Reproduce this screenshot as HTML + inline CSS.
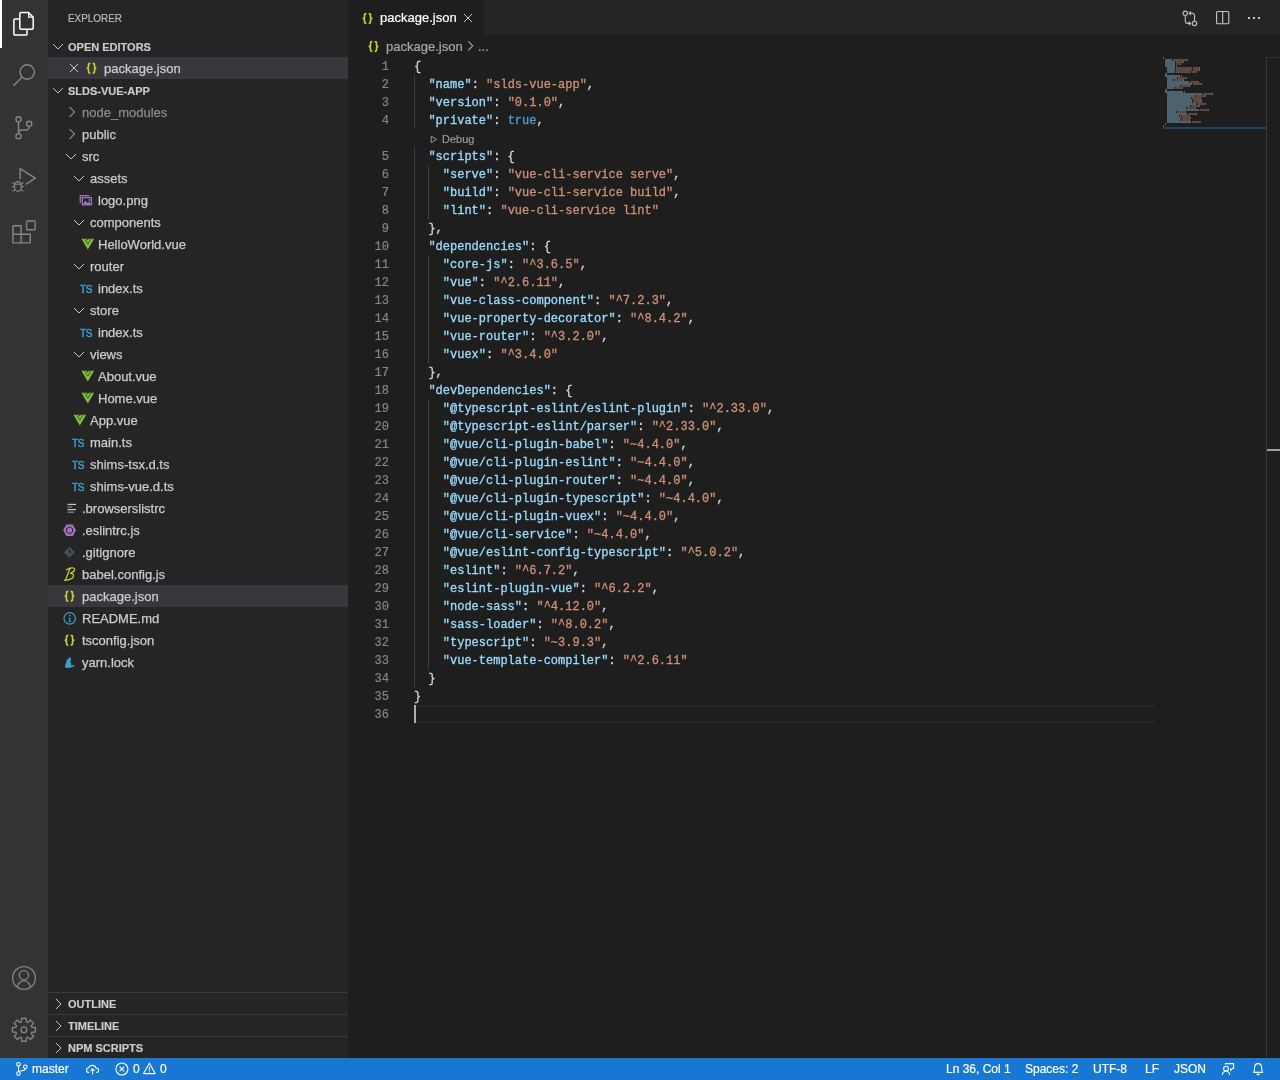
<!DOCTYPE html>
<html><head><meta charset="utf-8"><style>
*{box-sizing:border-box}
body{margin:0;width:1280px;height:1080px;overflow:hidden;background:#1e1e1e;font-family:"Liberation Sans",sans-serif;position:relative;color:#ccc}
.wrap{position:absolute;left:0;top:0;width:1280px;height:1080px;will-change:transform}
.a{position:absolute;white-space:nowrap;-webkit-text-stroke-width:0.2px}
.ab{position:absolute;left:0;top:0;width:48px;height:1058px;background:#333}
.sb{position:absolute;left:48px;top:0;width:300px;height:1058px;background:#252526}
.tabs{position:absolute;left:348px;top:0;width:932px;height:35px;background:#252526}
.tab{position:absolute;left:348px;top:0;width:136px;height:35px;background:#1e1e1e}
.st{position:absolute;left:0;top:1058px;width:1280px;height:22px;background:#1777d3;color:#fff;font-size:12px}
.st .t{-webkit-text-stroke-width:0.2px;position:absolute;top:0;line-height:22px;white-space:nowrap}
.row{position:absolute;left:48px;width:300px;height:22px}
.txt{-webkit-text-stroke-width:0.25px;position:absolute;line-height:22px;font-size:13px;color:#ccc;white-space:nowrap;top:1px}
.hdr{-webkit-text-stroke-width:0.15px;position:absolute;line-height:22px;font-size:11px;font-weight:bold;color:#ccc;white-space:nowrap;top:1px;left:20px}
.sel{background:#37373d}
.ln{-webkit-text-stroke-width:0.3px;position:absolute;left:414px;height:18px;line-height:18px;white-space:pre;font-family:"Liberation Mono",monospace;font-size:12px;color:#d4d4d4}
.num{-webkit-text-stroke-width:0.2px;position:absolute;left:348px;width:41px;height:18px;line-height:18px;text-align:right;font-family:"Liberation Mono",monospace;font-size:12px;color:#858585}
.num.cur{color:#858585}
.k{color:#9cdcfe}.s{color:#ce9178}.b{color:#569cd6}
.g{position:absolute;width:1px;background:#404040}
svg.i{position:absolute;left:0;top:0;overflow:visible}
.ts{position:absolute;font-weight:normal;font-size:10px;line-height:10px;color:#3a9fcb;letter-spacing:-0.4px;-webkit-text-stroke:0.45px #3a9fcb}
</style></head><body><div class="wrap">
<div class="ab"></div><div class="sb"></div><div class="tabs"></div><div class="tab"></div>
<div class="a" style="left:68px;top:7px;line-height:22px;font-size:11px;color:#bbb;transform:scaleX(0.9);transform-origin:0 0">EXPLORER</div>
<div class="row" style="top:35px"><div class="hdr">OPEN EDITORS</div></div>
<div class="row sel" style="top:57px"><div class="txt" style="left:56px">package.json</div></div>
<div class="row" style="top:79px"><div class="hdr">SLDS-VUE-APP</div></div>
<div class="row" style="top:101px"><div class="txt" style="left:34px;color:#8c8c8c">node_modules</div></div>
<div class="row" style="top:123px"><div class="txt" style="left:34px">public</div></div>
<div class="row" style="top:145px"><div class="txt" style="left:34px">src</div></div>
<div class="row" style="top:167px"><div class="txt" style="left:42px">assets</div></div>
<div class="row" style="top:189px"><div class="txt" style="left:50px">logo.png</div></div>
<div class="row" style="top:211px"><div class="txt" style="left:42px">components</div></div>
<div class="row" style="top:233px"><div class="txt" style="left:50px">HelloWorld.vue</div></div>
<div class="row" style="top:255px"><div class="txt" style="left:42px">router</div></div>
<div class="row" style="top:277px"><div class="txt" style="left:50px">index.ts</div></div>
<div class="ts" style="left:80px;top:285px">TS</div>
<div class="row" style="top:299px"><div class="txt" style="left:42px">store</div></div>
<div class="row" style="top:321px"><div class="txt" style="left:50px">index.ts</div></div>
<div class="ts" style="left:80px;top:329px">TS</div>
<div class="row" style="top:343px"><div class="txt" style="left:42px">views</div></div>
<div class="row" style="top:365px"><div class="txt" style="left:50px">About.vue</div></div>
<div class="row" style="top:387px"><div class="txt" style="left:50px">Home.vue</div></div>
<div class="row" style="top:409px"><div class="txt" style="left:42px">App.vue</div></div>
<div class="row" style="top:431px"><div class="txt" style="left:42px">main.ts</div></div>
<div class="ts" style="left:72px;top:439px">TS</div>
<div class="row" style="top:453px"><div class="txt" style="left:42px">shims-tsx.d.ts</div></div>
<div class="ts" style="left:72px;top:461px">TS</div>
<div class="row" style="top:475px"><div class="txt" style="left:42px">shims-vue.d.ts</div></div>
<div class="ts" style="left:72px;top:483px">TS</div>
<div class="row" style="top:497px"><div class="txt" style="left:34px">.browserslistrc</div></div>
<div class="row" style="top:519px"><div class="txt" style="left:34px">.eslintrc.js</div></div>
<div class="row" style="top:541px"><div class="txt" style="left:34px">.gitignore</div></div>
<div class="row" style="top:563px"><div class="txt" style="left:34px">babel.config.js</div></div>
<div class="row sel" style="top:585px"><div class="txt" style="left:34px">package.json</div></div>
<div class="row" style="top:607px"><div class="txt" style="left:34px">README.md</div></div>
<div class="row" style="top:629px"><div class="txt" style="left:34px">tsconfig.json</div></div>
<div class="row" style="top:651px"><div class="txt" style="left:34px">yarn.lock</div></div>
<div class="row" style="top:992px;border-top:1px solid #3c3c3c"><div class="hdr" style="top:0">OUTLINE</div></div>
<div class="row" style="top:1014px;border-top:1px solid #3c3c3c"><div class="hdr" style="top:0">TIMELINE</div></div>
<div class="row" style="top:1036px;border-top:1px solid #3c3c3c"><div class="hdr" style="top:0">NPM SCRIPTS</div></div>
<div class="a" style="left:380px;top:7px;line-height:22px;font-size:13px;color:#fff">package.json</div>
<div class="a" style="left:386px;top:36px;line-height:22px;font-size:13px;color:#a9a9a9">package.json</div>
<div class="a" style="left:478px;top:36px;line-height:22px;font-size:13px;color:#a9a9a9">...</div>
<div class="a" style="left:414px;top:705px;width:741px;height:18px;border-top:2px solid #282828;border-bottom:2px solid #282828"></div>
<div class="g" style="left:414px;top:75px;height:54px"></div>
<div class="g" style="left:414px;top:147px;height:540px"></div>
<div class="g" style="left:428px;top:165px;height:54px"></div>
<div class="g" style="left:428px;top:255px;height:108px"></div>
<div class="g" style="left:428px;top:399px;height:270px"></div>
<div class="num" style="top:58px">1</div>
<div class="ln" style="top:58px">{</div>
<div class="num" style="top:76px">2</div>
<div class="ln" style="top:76px">  <span class="k">"name"</span>: <span class="s">"slds-vue-app"</span>,</div>
<div class="num" style="top:94px">3</div>
<div class="ln" style="top:94px">  <span class="k">"version"</span>: <span class="s">"0.1.0"</span>,</div>
<div class="num" style="top:112px">4</div>
<div class="ln" style="top:112px">  <span class="k">"private"</span>: <span class="b">true</span>,</div>
<div class="num" style="top:148px">5</div>
<div class="ln" style="top:148px">  <span class="k">"scripts"</span>: {</div>
<div class="num" style="top:166px">6</div>
<div class="ln" style="top:166px">    <span class="k">"serve"</span>: <span class="s">"vue-cli-service serve"</span>,</div>
<div class="num" style="top:184px">7</div>
<div class="ln" style="top:184px">    <span class="k">"build"</span>: <span class="s">"vue-cli-service build"</span>,</div>
<div class="num" style="top:202px">8</div>
<div class="ln" style="top:202px">    <span class="k">"lint"</span>: <span class="s">"vue-cli-service lint"</span></div>
<div class="num" style="top:220px">9</div>
<div class="ln" style="top:220px">  },</div>
<div class="num" style="top:238px">10</div>
<div class="ln" style="top:238px">  <span class="k">"dependencies"</span>: {</div>
<div class="num" style="top:256px">11</div>
<div class="ln" style="top:256px">    <span class="k">"core-js"</span>: <span class="s">"^3.6.5"</span>,</div>
<div class="num" style="top:274px">12</div>
<div class="ln" style="top:274px">    <span class="k">"vue"</span>: <span class="s">"^2.6.11"</span>,</div>
<div class="num" style="top:292px">13</div>
<div class="ln" style="top:292px">    <span class="k">"vue-class-component"</span>: <span class="s">"^7.2.3"</span>,</div>
<div class="num" style="top:310px">14</div>
<div class="ln" style="top:310px">    <span class="k">"vue-property-decorator"</span>: <span class="s">"^8.4.2"</span>,</div>
<div class="num" style="top:328px">15</div>
<div class="ln" style="top:328px">    <span class="k">"vue-router"</span>: <span class="s">"^3.2.0"</span>,</div>
<div class="num" style="top:346px">16</div>
<div class="ln" style="top:346px">    <span class="k">"vuex"</span>: <span class="s">"^3.4.0"</span></div>
<div class="num" style="top:364px">17</div>
<div class="ln" style="top:364px">  },</div>
<div class="num" style="top:382px">18</div>
<div class="ln" style="top:382px">  <span class="k">"devDependencies"</span>: {</div>
<div class="num" style="top:400px">19</div>
<div class="ln" style="top:400px">    <span class="k">"@typescript-eslint/eslint-plugin"</span>: <span class="s">"^2.33.0"</span>,</div>
<div class="num" style="top:418px">20</div>
<div class="ln" style="top:418px">    <span class="k">"@typescript-eslint/parser"</span>: <span class="s">"^2.33.0"</span>,</div>
<div class="num" style="top:436px">21</div>
<div class="ln" style="top:436px">    <span class="k">"@vue/cli-plugin-babel"</span>: <span class="s">"~4.4.0"</span>,</div>
<div class="num" style="top:454px">22</div>
<div class="ln" style="top:454px">    <span class="k">"@vue/cli-plugin-eslint"</span>: <span class="s">"~4.4.0"</span>,</div>
<div class="num" style="top:472px">23</div>
<div class="ln" style="top:472px">    <span class="k">"@vue/cli-plugin-router"</span>: <span class="s">"~4.4.0"</span>,</div>
<div class="num" style="top:490px">24</div>
<div class="ln" style="top:490px">    <span class="k">"@vue/cli-plugin-typescript"</span>: <span class="s">"~4.4.0"</span>,</div>
<div class="num" style="top:508px">25</div>
<div class="ln" style="top:508px">    <span class="k">"@vue/cli-plugin-vuex"</span>: <span class="s">"~4.4.0"</span>,</div>
<div class="num" style="top:526px">26</div>
<div class="ln" style="top:526px">    <span class="k">"@vue/cli-service"</span>: <span class="s">"~4.4.0"</span>,</div>
<div class="num" style="top:544px">27</div>
<div class="ln" style="top:544px">    <span class="k">"@vue/eslint-config-typescript"</span>: <span class="s">"^5.0.2"</span>,</div>
<div class="num" style="top:562px">28</div>
<div class="ln" style="top:562px">    <span class="k">"eslint"</span>: <span class="s">"^6.7.2"</span>,</div>
<div class="num" style="top:580px">29</div>
<div class="ln" style="top:580px">    <span class="k">"eslint-plugin-vue"</span>: <span class="s">"^6.2.2"</span>,</div>
<div class="num" style="top:598px">30</div>
<div class="ln" style="top:598px">    <span class="k">"node-sass"</span>: <span class="s">"^4.12.0"</span>,</div>
<div class="num" style="top:616px">31</div>
<div class="ln" style="top:616px">    <span class="k">"sass-loader"</span>: <span class="s">"^8.0.2"</span>,</div>
<div class="num" style="top:634px">32</div>
<div class="ln" style="top:634px">    <span class="k">"typescript"</span>: <span class="s">"~3.9.3"</span>,</div>
<div class="num" style="top:652px">33</div>
<div class="ln" style="top:652px">    <span class="k">"vue-template-compiler"</span>: <span class="s">"^2.6.11"</span></div>
<div class="num" style="top:670px">34</div>
<div class="ln" style="top:670px">  }</div>
<div class="num" style="top:688px">35</div>
<div class="ln" style="top:688px">}</div>
<div class="num cur" style="top:706px">36</div>
<div class="a" style="left:414px;top:705px;width:2px;height:18px;background:#aeafad"></div>
<div class="a" style="left:442px;top:130px;line-height:18px;font-size:11px;color:#999">Debug</div>
<svg class="i" width="1" height="1"><path d="M431.2 136.2 L436.6 139.4 L431.2 142.6 Z" fill="none" stroke="#999" stroke-width="1"/></svg>
<svg class="i" width="1" height="1"><rect x="1163" y="127" width="103" height="2" fill="#264f78" opacity="0.75"/><g opacity="0.6"><rect x="1163.00" y="57.4" width="1.00" height="1.2" fill="#d4d4d4"/><rect x="1165.00" y="59.4" width="6.00" height="1.2" fill="#9cdcfe"/><rect x="1171.00" y="59.4" width="1.00" height="1.2" fill="#d4d4d4"/><rect x="1173.00" y="59.4" width="14.00" height="1.2" fill="#ce9178"/><rect x="1187.00" y="59.4" width="1.00" height="1.2" fill="#d4d4d4"/><rect x="1165.00" y="61.4" width="9.00" height="1.2" fill="#9cdcfe"/><rect x="1174.00" y="61.4" width="1.00" height="1.2" fill="#d4d4d4"/><rect x="1176.00" y="61.4" width="7.00" height="1.2" fill="#ce9178"/><rect x="1183.00" y="61.4" width="1.00" height="1.2" fill="#d4d4d4"/><rect x="1165.00" y="63.4" width="9.00" height="1.2" fill="#9cdcfe"/><rect x="1174.00" y="63.4" width="1.00" height="1.2" fill="#d4d4d4"/><rect x="1176.00" y="63.4" width="4.00" height="1.2" fill="#569cd6"/><rect x="1180.00" y="63.4" width="1.00" height="1.2" fill="#d4d4d4"/><rect x="1165.00" y="65.4" width="9.00" height="1.2" fill="#9cdcfe"/><rect x="1174.00" y="65.4" width="1.00" height="1.2" fill="#d4d4d4"/><rect x="1176.00" y="65.4" width="1.00" height="1.2" fill="#d4d4d4"/><rect x="1167.00" y="67.4" width="7.00" height="1.2" fill="#9cdcfe"/><rect x="1174.00" y="67.4" width="1.00" height="1.2" fill="#d4d4d4"/><rect x="1176.00" y="67.4" width="16.00" height="1.2" fill="#ce9178"/><rect x="1193.00" y="67.4" width="6.00" height="1.2" fill="#ce9178"/><rect x="1199.00" y="67.4" width="1.00" height="1.2" fill="#d4d4d4"/><rect x="1167.00" y="69.4" width="7.00" height="1.2" fill="#9cdcfe"/><rect x="1174.00" y="69.4" width="1.00" height="1.2" fill="#d4d4d4"/><rect x="1176.00" y="69.4" width="16.00" height="1.2" fill="#ce9178"/><rect x="1193.00" y="69.4" width="6.00" height="1.2" fill="#ce9178"/><rect x="1199.00" y="69.4" width="1.00" height="1.2" fill="#d4d4d4"/><rect x="1167.00" y="71.4" width="6.00" height="1.2" fill="#9cdcfe"/><rect x="1173.00" y="71.4" width="1.00" height="1.2" fill="#d4d4d4"/><rect x="1175.00" y="71.4" width="16.00" height="1.2" fill="#ce9178"/><rect x="1192.00" y="71.4" width="5.00" height="1.2" fill="#ce9178"/><rect x="1165.00" y="73.4" width="2.00" height="1.2" fill="#d4d4d4"/><rect x="1165.00" y="75.4" width="14.00" height="1.2" fill="#9cdcfe"/><rect x="1179.00" y="75.4" width="1.00" height="1.2" fill="#d4d4d4"/><rect x="1181.00" y="75.4" width="1.00" height="1.2" fill="#d4d4d4"/><rect x="1167.00" y="77.4" width="9.00" height="1.2" fill="#9cdcfe"/><rect x="1176.00" y="77.4" width="1.00" height="1.2" fill="#d4d4d4"/><rect x="1178.00" y="77.4" width="8.00" height="1.2" fill="#ce9178"/><rect x="1186.00" y="77.4" width="1.00" height="1.2" fill="#d4d4d4"/><rect x="1167.00" y="79.4" width="5.00" height="1.2" fill="#9cdcfe"/><rect x="1172.00" y="79.4" width="1.00" height="1.2" fill="#d4d4d4"/><rect x="1174.00" y="79.4" width="9.00" height="1.2" fill="#ce9178"/><rect x="1183.00" y="79.4" width="1.00" height="1.2" fill="#d4d4d4"/><rect x="1167.00" y="81.4" width="21.00" height="1.2" fill="#9cdcfe"/><rect x="1188.00" y="81.4" width="1.00" height="1.2" fill="#d4d4d4"/><rect x="1190.00" y="81.4" width="8.00" height="1.2" fill="#ce9178"/><rect x="1198.00" y="81.4" width="1.00" height="1.2" fill="#d4d4d4"/><rect x="1167.00" y="83.4" width="24.00" height="1.2" fill="#9cdcfe"/><rect x="1191.00" y="83.4" width="1.00" height="1.2" fill="#d4d4d4"/><rect x="1193.00" y="83.4" width="8.00" height="1.2" fill="#ce9178"/><rect x="1201.00" y="83.4" width="1.00" height="1.2" fill="#d4d4d4"/><rect x="1167.00" y="85.4" width="12.00" height="1.2" fill="#9cdcfe"/><rect x="1179.00" y="85.4" width="1.00" height="1.2" fill="#d4d4d4"/><rect x="1181.00" y="85.4" width="8.00" height="1.2" fill="#ce9178"/><rect x="1189.00" y="85.4" width="1.00" height="1.2" fill="#d4d4d4"/><rect x="1167.00" y="87.4" width="6.00" height="1.2" fill="#9cdcfe"/><rect x="1173.00" y="87.4" width="1.00" height="1.2" fill="#d4d4d4"/><rect x="1175.00" y="87.4" width="8.00" height="1.2" fill="#ce9178"/><rect x="1165.00" y="89.4" width="2.00" height="1.2" fill="#d4d4d4"/><rect x="1165.00" y="91.4" width="17.00" height="1.2" fill="#9cdcfe"/><rect x="1182.00" y="91.4" width="1.00" height="1.2" fill="#d4d4d4"/><rect x="1184.00" y="91.4" width="1.00" height="1.2" fill="#d4d4d4"/><rect x="1167.00" y="93.4" width="34.00" height="1.2" fill="#9cdcfe"/><rect x="1201.00" y="93.4" width="1.00" height="1.2" fill="#d4d4d4"/><rect x="1203.00" y="93.4" width="9.00" height="1.2" fill="#ce9178"/><rect x="1212.00" y="93.4" width="1.00" height="1.2" fill="#d4d4d4"/><rect x="1167.00" y="95.4" width="27.00" height="1.2" fill="#9cdcfe"/><rect x="1194.00" y="95.4" width="1.00" height="1.2" fill="#d4d4d4"/><rect x="1196.00" y="95.4" width="9.00" height="1.2" fill="#ce9178"/><rect x="1205.00" y="95.4" width="1.00" height="1.2" fill="#d4d4d4"/><rect x="1167.00" y="97.4" width="23.00" height="1.2" fill="#9cdcfe"/><rect x="1190.00" y="97.4" width="1.00" height="1.2" fill="#d4d4d4"/><rect x="1192.00" y="97.4" width="8.00" height="1.2" fill="#ce9178"/><rect x="1200.00" y="97.4" width="1.00" height="1.2" fill="#d4d4d4"/><rect x="1167.00" y="99.4" width="24.00" height="1.2" fill="#9cdcfe"/><rect x="1191.00" y="99.4" width="1.00" height="1.2" fill="#d4d4d4"/><rect x="1193.00" y="99.4" width="8.00" height="1.2" fill="#ce9178"/><rect x="1201.00" y="99.4" width="1.00" height="1.2" fill="#d4d4d4"/><rect x="1167.00" y="101.4" width="24.00" height="1.2" fill="#9cdcfe"/><rect x="1191.00" y="101.4" width="1.00" height="1.2" fill="#d4d4d4"/><rect x="1193.00" y="101.4" width="8.00" height="1.2" fill="#ce9178"/><rect x="1201.00" y="101.4" width="1.00" height="1.2" fill="#d4d4d4"/><rect x="1167.00" y="103.4" width="28.00" height="1.2" fill="#9cdcfe"/><rect x="1195.00" y="103.4" width="1.00" height="1.2" fill="#d4d4d4"/><rect x="1197.00" y="103.4" width="8.00" height="1.2" fill="#ce9178"/><rect x="1205.00" y="103.4" width="1.00" height="1.2" fill="#d4d4d4"/><rect x="1167.00" y="105.4" width="22.00" height="1.2" fill="#9cdcfe"/><rect x="1189.00" y="105.4" width="1.00" height="1.2" fill="#d4d4d4"/><rect x="1191.00" y="105.4" width="8.00" height="1.2" fill="#ce9178"/><rect x="1199.00" y="105.4" width="1.00" height="1.2" fill="#d4d4d4"/><rect x="1167.00" y="107.4" width="18.00" height="1.2" fill="#9cdcfe"/><rect x="1185.00" y="107.4" width="1.00" height="1.2" fill="#d4d4d4"/><rect x="1187.00" y="107.4" width="8.00" height="1.2" fill="#ce9178"/><rect x="1195.00" y="107.4" width="1.00" height="1.2" fill="#d4d4d4"/><rect x="1167.00" y="109.4" width="31.00" height="1.2" fill="#9cdcfe"/><rect x="1198.00" y="109.4" width="1.00" height="1.2" fill="#d4d4d4"/><rect x="1200.00" y="109.4" width="8.00" height="1.2" fill="#ce9178"/><rect x="1208.00" y="109.4" width="1.00" height="1.2" fill="#d4d4d4"/><rect x="1167.00" y="111.4" width="8.00" height="1.2" fill="#9cdcfe"/><rect x="1175.00" y="111.4" width="1.00" height="1.2" fill="#d4d4d4"/><rect x="1177.00" y="111.4" width="8.00" height="1.2" fill="#ce9178"/><rect x="1185.00" y="111.4" width="1.00" height="1.2" fill="#d4d4d4"/><rect x="1167.00" y="113.4" width="19.00" height="1.2" fill="#9cdcfe"/><rect x="1186.00" y="113.4" width="1.00" height="1.2" fill="#d4d4d4"/><rect x="1188.00" y="113.4" width="8.00" height="1.2" fill="#ce9178"/><rect x="1196.00" y="113.4" width="1.00" height="1.2" fill="#d4d4d4"/><rect x="1167.00" y="115.4" width="11.00" height="1.2" fill="#9cdcfe"/><rect x="1178.00" y="115.4" width="1.00" height="1.2" fill="#d4d4d4"/><rect x="1180.00" y="115.4" width="9.00" height="1.2" fill="#ce9178"/><rect x="1189.00" y="115.4" width="1.00" height="1.2" fill="#d4d4d4"/><rect x="1167.00" y="117.4" width="13.00" height="1.2" fill="#9cdcfe"/><rect x="1180.00" y="117.4" width="1.00" height="1.2" fill="#d4d4d4"/><rect x="1182.00" y="117.4" width="8.00" height="1.2" fill="#ce9178"/><rect x="1190.00" y="117.4" width="1.00" height="1.2" fill="#d4d4d4"/><rect x="1167.00" y="119.4" width="12.00" height="1.2" fill="#9cdcfe"/><rect x="1179.00" y="119.4" width="1.00" height="1.2" fill="#d4d4d4"/><rect x="1181.00" y="119.4" width="8.00" height="1.2" fill="#ce9178"/><rect x="1189.00" y="119.4" width="1.00" height="1.2" fill="#d4d4d4"/><rect x="1167.00" y="121.4" width="23.00" height="1.2" fill="#9cdcfe"/><rect x="1190.00" y="121.4" width="1.00" height="1.2" fill="#d4d4d4"/><rect x="1192.00" y="121.4" width="9.00" height="1.2" fill="#ce9178"/><rect x="1165.00" y="123.4" width="1.00" height="1.2" fill="#d4d4d4"/><rect x="1163.00" y="125.4" width="1.00" height="1.2" fill="#d4d4d4"/></g></svg>
<div class="a" style="left:1266px;top:57px;width:1px;height:1001px;background:#3a3a3a"></div>
<div class="a" style="left:1266px;top:57px;width:14px;height:1px;background:#333"></div>
<div class="a" style="left:1267px;top:449px;width:13px;height:2px;background:#a0a0a0"></div>
<div class="st">
<div class="t" style="left:32px">master</div>
<div class="t" style="left:133px">0</div>
<div class="t" style="left:160px">0</div>
<div class="t" style="left:946px">Ln 36, Col 1</div>
<div class="t" style="left:1025px">Spaces: 2</div>
<div class="t" style="left:1093px">UTF-8</div>
<div class="t" style="left:1145px">LF</div>
<div class="t" style="left:1174px">JSON</div>
</div>
<svg class="i" width="1280" height="1080" viewBox="0 0 1280 1080">
<!-- activity bar -->
<rect x="0" y="0" width="2" height="48" fill="#fff"/>
<g fill="none" stroke="#fff" stroke-width="1.5" stroke-linejoin="round">
 <path d="M19.8 19 H15 Q13.9 19 13.9 20.1 V34 Q13.9 35.1 15 35.1 H25.9 Q27 35.1 27 34 V29.2"/>
 <path d="M20.9 12.6 H28.6 L33.2 17.2 V28.1 Q33.2 29.2 32.1 29.2 H20.9 Q19.8 29.2 19.8 28.1 V13.7 Q19.8 12.6 20.9 12.6 Z"/>
 <path d="M28.6 12.6 V17.2 H33.2" stroke-width="1.2"/>
</g>
<g fill="none" stroke="#858585" stroke-width="1.4">
 <circle cx="27.2" cy="72" r="7.2"/>
 <path d="M22.1 77.1 L13.5 85.8"/>
 <circle cx="18.5" cy="119.3" r="2.6"/>
 <circle cx="18.5" cy="136.2" r="2.6"/>
 <circle cx="29.2" cy="123.8" r="2.6"/>
 <path d="M18.5 121.9 V133.6"/>
 <path d="M29.2 126.4 Q29.2 130 25.5 130 H21.8 Q18.5 130 18.5 133"/>
 <path d="M20.1 178.9 V168.6 L35.3 178.1 L25.8 184.3" stroke-linejoin="round"/>
 <ellipse cx="17.9" cy="186.4" rx="3.5" ry="4.9" stroke-width="1.3"/>
 <path d="M14.4 184.2 H21.4" stroke-width="1.2"/>
 <path d="M12.4 182.4 L14.8 183.9 M23.4 182.4 L21 183.9 M12.1 186.6 H14.4 M23.7 186.6 H21.4 M12.4 191.2 L14.7 189.8 M23.4 191.2 L21.1 189.8" stroke-width="1.2"/>
 <path d="M13.4 225.7 H21.1 V242.9 H13.4 Q12.9 242.9 12.9 242.4 V226.2 Q12.9 225.7 13.4 225.7 Z M12.9 234.3 H30.3 V242.4 Q30.3 242.9 29.8 242.9 H21.1" stroke-linejoin="round"/>
 <rect x="26.6" y="221" width="8.6" height="8.8" rx="0.8"/>
 <circle cx="24" cy="978" r="11.4" stroke-width="1.3"/>
 <circle cx="23.9" cy="975.3" r="4.6" stroke-width="1.3"/>
 <path d="M17.2 987 Q18.8 980.8 23.9 980.8 Q29 980.8 30.6 987" stroke-width="1.3"/>
</g>
<g fill="none" stroke="#858585" stroke-width="1.3" stroke-linejoin="round">
 <path d="M21.45 1021.87 L21.58 1018.33 L26.22 1018.33 L26.35 1021.87 L27.77 1022.46 L30.36 1020.05 L33.65 1023.34 L31.24 1025.93 L31.83 1027.35 L35.37 1027.48 L35.37 1032.12 L31.83 1032.25 L31.24 1033.67 L33.65 1036.26 L30.36 1039.55 L27.77 1037.14 L26.35 1037.73 L26.22 1041.27 L21.58 1041.27 L21.45 1037.73 L20.03 1037.14 L17.44 1039.55 L14.15 1036.26 L16.56 1033.67 L15.97 1032.25 L12.43 1032.12 L12.43 1027.48 L15.97 1027.35 L16.56 1025.93 L14.15 1023.34 L17.44 1020.05 L20.03 1022.46 Z"/>
 <circle cx="23.9" cy="1029.8" r="2.9"/>
</g>
<!-- sidebar chevrons -->
<g fill="none" stroke="#c5c5c5" stroke-width="1">
 <path d="M53 44 L58 49 L63 44"/>
 <path d="M53 88 L58 93 L63 88"/>
 <path d="M70 64 L78 72 M78 64 L70 72"/>
 <path d="M69.5 107 L74.5 112 L69.5 117"/>
 <path d="M69.5 129 L74.5 134 L69.5 139"/>
 <path d="M66 154 L71 159 L76 154"/>
 <path d="M74 176 L79 181 L84 176"/>
 <path d="M74 220 L79 225 L84 220"/>
 <path d="M74 264 L79 269 L84 264"/>
 <path d="M74 308 L79 313 L84 308"/>
 <path d="M74 352 L79 357 L84 352"/>
 <path d="M56 999 L61 1004 L56 1009"/>
 <path d="M56 1021 L61 1026 L56 1031"/>
 <path d="M56 1043 L61 1048 L56 1053"/>
 <path d="M464 14 L472 22 M472 14 L464 22"/>
</g>
<!-- json braces -->
<path transform="translate(86 62.8)" d="M4.3 0.6 Q2.5 0.6 2.5 2.2 V4 Q2.5 5.5 0.6 5.5 Q2.5 5.5 2.5 7 V8.8 Q2.5 10.4 4.3 10.4 M6.7 0.6 Q8.5 0.6 8.5 2.2 V4 Q8.5 5.5 10.4 5.5 Q8.5 5.5 8.5 7 V8.8 Q8.5 10.4 6.7 10.4" fill="none" stroke="#cfcf2e" stroke-width="1.6"/>
<path transform="translate(64 590.8)" d="M4.3 0.6 Q2.5 0.6 2.5 2.2 V4 Q2.5 5.5 0.6 5.5 Q2.5 5.5 2.5 7 V8.8 Q2.5 10.4 4.3 10.4 M6.7 0.6 Q8.5 0.6 8.5 2.2 V4 Q8.5 5.5 10.4 5.5 Q8.5 5.5 8.5 7 V8.8 Q8.5 10.4 6.7 10.4" fill="none" stroke="#cfcf2e" stroke-width="1.6"/>
<path transform="translate(64 634.8)" d="M4.3 0.6 Q2.5 0.6 2.5 2.2 V4 Q2.5 5.5 0.6 5.5 Q2.5 5.5 2.5 7 V8.8 Q2.5 10.4 4.3 10.4 M6.7 0.6 Q8.5 0.6 8.5 2.2 V4 Q8.5 5.5 10.4 5.5 Q8.5 5.5 8.5 7 V8.8 Q8.5 10.4 6.7 10.4" fill="none" stroke="#cfcf2e" stroke-width="1.6"/>
<path transform="translate(362 13)" d="M4.3 0.6 Q2.5 0.6 2.5 2.2 V4 Q2.5 5.5 0.6 5.5 Q2.5 5.5 2.5 7 V8.8 Q2.5 10.4 4.3 10.4 M6.7 0.6 Q8.5 0.6 8.5 2.2 V4 Q8.5 5.5 10.4 5.5 Q8.5 5.5 8.5 7 V8.8 Q8.5 10.4 6.7 10.4" fill="none" stroke="#cfcf2e" stroke-width="1.6"/>
<path transform="translate(368 41)" d="M4.3 0.6 Q2.5 0.6 2.5 2.2 V4 Q2.5 5.5 0.6 5.5 Q2.5 5.5 2.5 7 V8.8 Q2.5 10.4 4.3 10.4 M6.7 0.6 Q8.5 0.6 8.5 2.2 V4 Q8.5 5.5 10.4 5.5 Q8.5 5.5 8.5 7 V8.8 Q8.5 10.4 6.7 10.4" fill="none" stroke="#cfcf2e" stroke-width="1.6"/>
<path d="M468.3 41.3 L472.7 45.8 L468.3 50.3" fill="none" stroke="#a9a9a9" stroke-width="1.1"/>
<!-- vue icons -->
<g transform="translate(81.5 238.5)"><path d="M0 0.3 H12.6 L6.3 11 Z" fill="#84c43a"/><path d="M2.9 0 L6.3 5.9 L9.7 0" fill="none" stroke="#252526" stroke-width="0.7"/><path d="M5.2 0.3 H7.4 L6.3 2.2 Z" fill="#252526"/></g>
<g transform="translate(81.5 370.5)"><path d="M0 0.3 H12.6 L6.3 11 Z" fill="#84c43a"/><path d="M2.9 0 L6.3 5.9 L9.7 0" fill="none" stroke="#252526" stroke-width="0.7"/><path d="M5.2 0.3 H7.4 L6.3 2.2 Z" fill="#252526"/></g>
<g transform="translate(81.5 392.5)"><path d="M0 0.3 H12.6 L6.3 11 Z" fill="#84c43a"/><path d="M2.9 0 L6.3 5.9 L9.7 0" fill="none" stroke="#252526" stroke-width="0.7"/><path d="M5.2 0.3 H7.4 L6.3 2.2 Z" fill="#252526"/></g>
<g transform="translate(73.5 414.5)"><path d="M0 0.3 H12.6 L6.3 11 Z" fill="#84c43a"/><path d="M2.9 0 L6.3 5.9 L9.7 0" fill="none" stroke="#252526" stroke-width="0.7"/><path d="M5.2 0.3 H7.4 L6.3 2.2 Z" fill="#252526"/></g>
<!-- image icon -->
<g fill="none" stroke="#a074c4" stroke-width="1.3">
 <path d="M80.3 203 V195.6 H89.5"/>
 <rect x="82.4" y="197.6" width="9" height="7.2"/>
</g>
<path d="M83 204.6 L85.5 200.5 L87.5 203 L89 201.5 L91 204.6 Z" fill="#a074c4"/>
<rect x="88.6" y="199.2" width="1.6" height="1.6" fill="#a074c4"/>
<!-- browserslist lines -->
<g stroke-width="1.2">
 <path d="M67.5 504.4 H76" stroke="#c8c8c8"/>
 <path d="M67.5 507 H72.3" stroke="#8a8a8a"/>
 <path d="M67.5 509.6 H76" stroke="#c8c8c8"/>
 <path d="M67.5 512.2 H74" stroke="#8a8a8a"/>
</g>
<!-- eslint -->
<path d="M66.4 524.6 H72.8 L76 530.3 L72.8 536 H66.4 L63.2 530.3 Z" fill="#a074c4"/>
<path d="M69.6 526.9 L72.55 528.6 V532 L69.6 533.7 L66.65 532 V528.6 Z" fill="none" stroke="#252526" stroke-width="1"/>
<circle cx="69.6" cy="530.3" r="1.9" fill="#a074c4"/>
<!-- git -->
<path d="M69.5 546.8 L75 552.3 L69.5 557.8 L64 552.3 Z" fill="#41535b"/>
<path d="M68.3 548.6 L69.5 549.8 V554.6 M69.5 550.6 L71.6 552.6 V553.4" stroke="#252526" stroke-width="0.9" fill="none"/>
<!-- babel B -->
<path d="M66.5 569.8 Q70 567.3 73.5 568 Q75.6 568.8 74 571 Q72.5 572.8 70.2 573.3 Q73.8 573.3 73.5 575.8 Q73 578.6 69 579.6 Q66.5 580.2 64.3 580.3 M70 568.2 Q68 574 65.5 580" fill="none" stroke="#cfcf2e" stroke-width="1.2" stroke-linecap="round"/>
<!-- info -->
<circle cx="69.7" cy="618.4" r="5.7" fill="none" stroke="#3a9fcb" stroke-width="1.2"/>
<circle cx="69.8" cy="615.6" r="0.9" fill="#3a9fcb"/>
<path d="M68.6 617.4 H70.4 V621.2 H71.2 V622 H68.4 V621.2 H69.2 V618.2 H68.6 Z" fill="#3a9fcb"/>
<!-- yarn cat -->
<path d="M69.3 657 Q70 657.6 70.8 658.2 Q71.3 660 70.5 661.8 Q71.2 663.3 71.3 665.6 Q73 665 74.5 665 Q74.8 665.6 73.6 666.5 Q72.4 667.3 71 667.6 Q69 668.2 66.5 668 Q65 667.9 65 666.8 Q65 664.6 65.8 663.2 Q66.5 662.2 66.6 661.4 Q66 660.8 66.8 659.9 Q68 659.3 68.6 658.6 Z" fill="#3a9fcb"/>
<!-- editor actions -->
<g fill="none" stroke="#c5c5c5" stroke-width="1.1">
 <circle cx="1185.3" cy="13.3" r="2.2"/>
 <circle cx="1194.5" cy="23.4" r="2.2"/>
 <path d="M1185.3 15.5 V21 Q1185.3 23.4 1187.7 23.4 H1190.6 M1188.8 21.6 L1190.6 23.4 L1188.8 25.2"/>
 <path d="M1194.5 21.2 V15.7 Q1194.5 13.3 1192.1 13.3 H1189.2 M1191 11.5 L1189.2 13.3 L1191 15.1"/>
 <rect x="1216.6" y="11.5" width="12.2" height="12.2" rx="1"/>
 <path d="M1222.7 11.5 V23.7"/>
</g>
<g fill="#c5c5c5">
 <rect x="1248" y="17" width="2" height="2"/><rect x="1253" y="17" width="2" height="2"/><rect x="1258" y="17" width="2" height="2"/>
</g>
<!-- status bar icons -->
<g fill="none" stroke="#fff" stroke-width="1.1">
 <circle cx="18.5" cy="1064.3" r="1.8"/>
 <circle cx="18.5" cy="1073.6" r="1.8"/>
 <circle cx="25.3" cy="1066.8" r="1.8"/>
 <path d="M18.5 1066.1 V1071.8 M25.3 1068.6 Q25.3 1070.8 22 1070.8 Q18.5 1070.8 18.5 1072"/>
 <path transform="translate(0.7 0)" d="M88.5 1072.5 Q85.8 1072.5 85.8 1070.2 Q85.8 1068 88 1067.8 Q88.8 1065.4 91.6 1065.4 Q94.6 1065.4 95.2 1068 Q98 1068.2 98 1070.3 Q98 1072.5 95.5 1072.5 M91.9 1074.2 V1069 M89.9 1070.8 L91.9 1068.8 L93.9 1070.8"/>
 <circle cx="121.9" cy="1069" r="6"/>
 <path d="M119.6 1066.7 L124.2 1071.3 M124.2 1066.7 L119.6 1071.3"/>
 <path d="M149.4 1063.2 L155.2 1073.6 H143.6 Z" stroke-linejoin="round"/>
 <path d="M149.4 1066.8 V1070.6 M149.4 1071.6 V1072.6"/>
 <circle cx="1226" cy="1068.6" r="2.4"/>
 <path d="M1222.3 1074.8 Q1222.8 1071.2 1226 1071.2 Q1229.2 1071.2 1229.7 1074.8"/>
 <path d="M1225.4 1064.6 V1063.6 H1233.6 V1068.4 H1232.6 L1230.6 1070.3 V1068.6" stroke-linejoin="miter"/>
 <path d="M1253.8 1072.4 Q1254.6 1070.5 1254.6 1067.5 Q1254.6 1063.6 1258.1 1063.6 Q1261.6 1063.6 1261.6 1067.5 Q1261.6 1070.5 1262.4 1072.4 Z M1256.6 1074 Q1258.1 1075.2 1259.6 1074"/>
</g>
</svg>

</div></body></html>
